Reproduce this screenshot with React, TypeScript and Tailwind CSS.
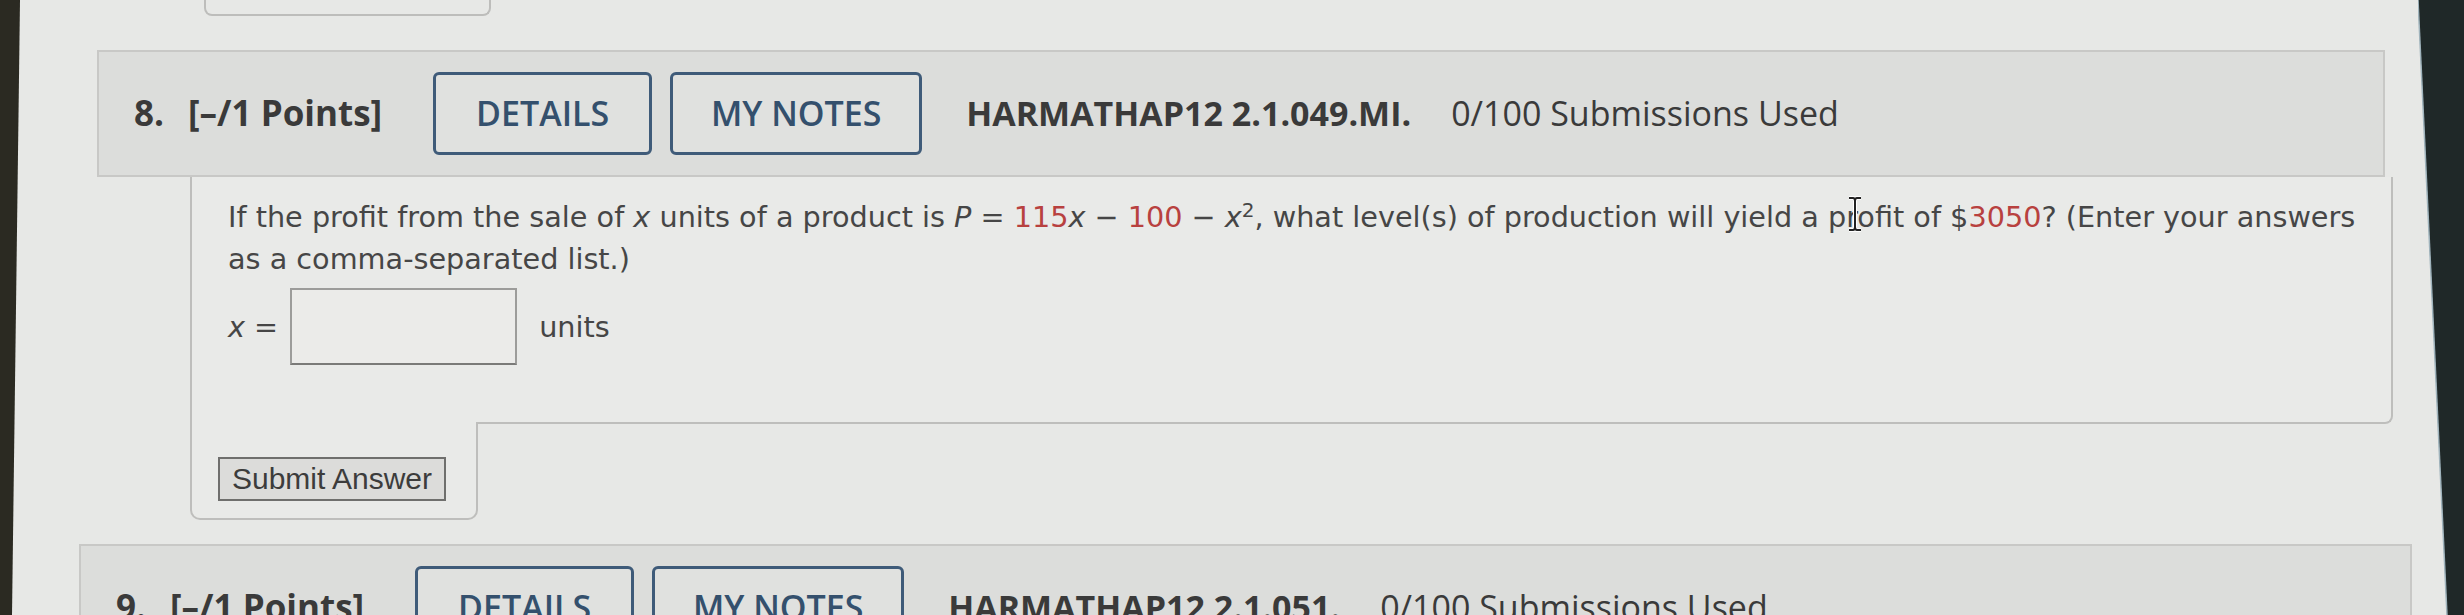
import React from "react";

const Red = ({ children }: { children: React.ReactNode }) => (
  <span className="text-[#b8413f]">{children}</span>
);

const QuestionHeader = ({
  num,
  code,
  className,
}: {
  num: number;
  code: string;
  className: string;
}) => (
  <div
    className={`flex h-[127px] items-center border-2 border-[#c8c8c6] bg-[#dcdddb] pl-[35px] font-['Open_Sans',sans-serif] text-[34px] text-[#3a3a3a] ${className}`}
  >
    <span className="text-[35px] font-bold">{num}.</span>
    <span className="ml-[24px] text-[35px] font-bold">[–/1 Points]</span>
    <button className="ml-[51px] h-[83px] w-[219px] rounded-[6px] border-[3px] border-[#3f5b79] bg-[#e0e1df] text-[34px] font-semibold text-[#34506d]">
      DETAILS
    </button>
    <button className="ml-[18px] h-[83px] w-[252px] rounded-[6px] border-[3px] border-[#3f5b79] bg-[#e0e1df] text-[34px] font-semibold text-[#34506d]">
      MY NOTES
    </button>
    <span className="ml-[44px] font-bold">{code}</span>
    <span className="ml-[40px]">0/100 Submissions Used</span>
  </div>
);

const App: React.FC = () => {
  return (
    <div className="relative flex h-[615px] w-[2464px] overflow-hidden bg-[#e7e8e6]">
      {/* left bezel */}
      <div className="w-[20px] shrink-0">
        <svg width="20" height="615" className="block">
          <polygon points="0,0 20,0 12,615 0,615" fill="#2b2a22" />
        </svg>
      </div>

      <div className="w-[2398px] shrink-0">
        {/* bottom of the previous question's submit box */}
        <div className="ml-[184px] h-[16px] w-[287px] rounded-b-[8px] border-x-2 border-b-2 border-[#bdbdbb]" />

        <QuestionHeader
          num={8}
          code="HARMATHAP12 2.1.049.MI."
          className="mt-[34px] ml-[77px] w-[2288px]"
        />

        <div className="ml-[170px] w-[2203px] rounded-br-[8px] border-x-2 border-b-2 border-[#bebebc] bg-[#e9eae8] pt-[19px] pb-[57px] pl-[36px] font-['DejaVu_Sans',sans-serif] text-[28.7px] leading-[42px] text-[#464646]">
          <p>
            If the profit from the sale of <i>x</i> units of a product is{" "}
            <i>P</i> = <Red>115</Red>
            <i>x</i> − <Red>100</Red> − <i>x</i>
            <sup className="text-[20px]">2</sup>, what level(s) of production
            will yield a profit of $<Red>3050</Red>? (Enter your answers
            <br />
            as a comma-separated list.)
          </p>
          <div className="mt-[8px] flex items-center">
            <span>
              <i>x</i> =
            </span>
            <input
              type="text"
              className="ml-[12px] h-[77px] w-[227px] border-2 border-[#9c9c9a] border-b-[#7a7a78] bg-[#ebebe9]"
            />
            <span className="ml-[22px]">units</span>
          </div>
        </div>

        <div className="relative z-10 -mt-[2px] ml-[170px] h-[98px] w-[288px] rounded-b-[10px] border-x-2 border-b-2 border-[#bebebc] bg-[#e9eae8] pt-[35px] pl-[26px]">
          <button className="h-[44px] w-[228px] border-2 border-[#6f6f6d] bg-[#dcdcda] font-['Liberation_Sans',sans-serif] text-[30px] leading-none text-[#3c3c3c]">
            Submit Answer
          </button>
        </div>

        <QuestionHeader
          num={9}
          code="HARMATHAP12 2.1.051."
          className="mt-[24px] ml-[59px] w-[2333px]"
        />
      </div>

      {/* right bezel */}
      <div className="w-[46px] shrink-0">
        <svg width="46" height="615" className="block">
          <polygon points="0,0 46,0 46,615 29,615" fill="#1f2828" />
          <line x1="0" y1="0" x2="29" y2="615" stroke="#9fb3bc" strokeWidth="1.5" />
        </svg>
      </div>

      {/* mouse I-beam cursor over "profit" */}
      <svg
        width="18"
        height="36"
        viewBox="0 0 18 36"
        className="absolute top-[196px] left-[1846px]"
      >
        <path
          d="M3 2 H7 Q9 2 9 5 Q9 2 11 2 H15 M9 5 V31 M3 34 H7 Q9 34 9 31 Q9 34 11 34 H15"
          fill="none"
          stroke="#ffffff"
          strokeWidth="4"
        />
        <path
          d="M3 2 H7 Q9 2 9 5 Q9 2 11 2 H15 M9 5 V31 M3 34 H7 Q9 34 9 31 Q9 34 11 34 H15"
          fill="none"
          stroke="#222"
          strokeWidth="2"
        />
      </svg>
    </div>
  );
};

export default App;
